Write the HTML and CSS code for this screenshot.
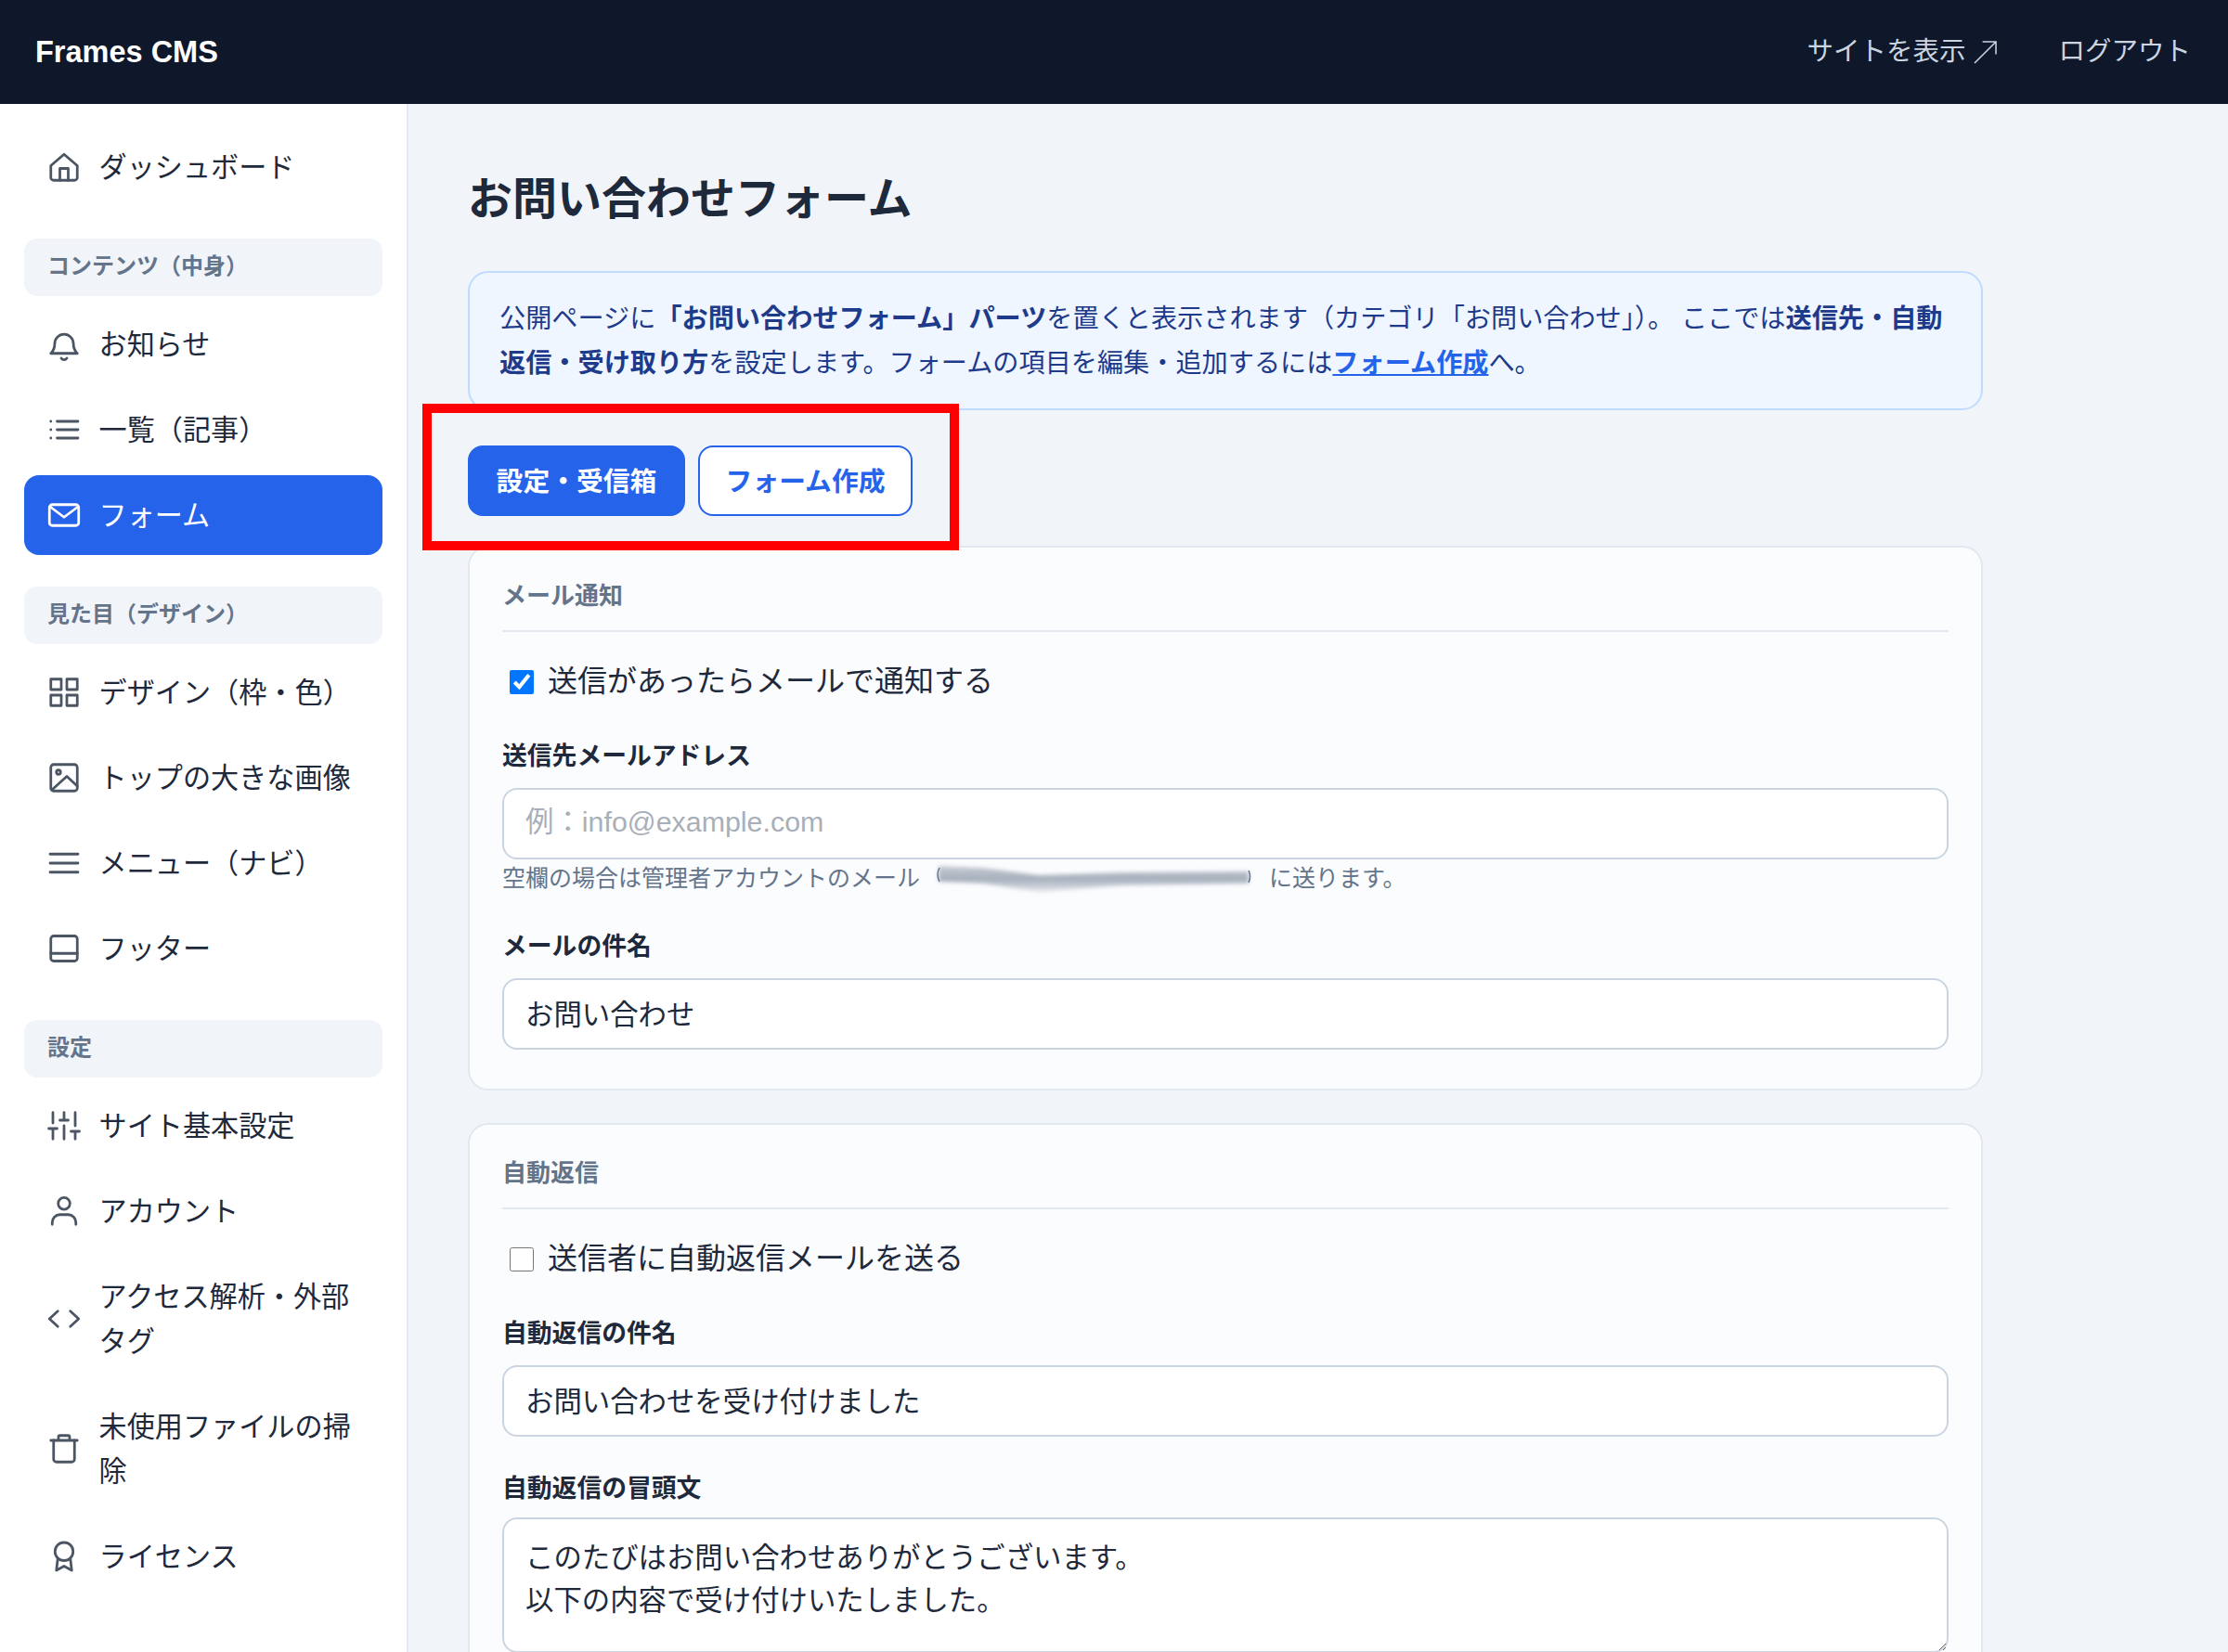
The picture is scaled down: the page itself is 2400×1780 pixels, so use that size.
FILE: index.html
```html
<!DOCTYPE html>
<html lang="ja">
<head>
<meta charset="utf-8">
<title>Frames CMS</title>
<link rel="stylesheet" href="styles.css">
</head>
<body>
<header class="topbar">
  <div class="brand">Frames CMS</div>
  <nav class="top-links">
    <a class="top-link" href="#"><span>サイトを表示</span><svg class="ext" viewBox="0 0 26 26"><path d="M1 25 25 1M10 1h15v14"/></svg></a>
    <a class="top-link" href="#">ログアウト</a>
  </nav>
</header>
<div class="shell">
  <aside class="sidebar">
    <a class="nav-item" href="#"><svg class="ico" viewBox="0 0 24 24"><path d="M2.500 11 12 2.800 21.500 11v8.500a2 2 0 0 1-2 2h-15a2 2 0 0 1-2-2z"/><path d="M9 21.500V13h6v8.500"/></svg><span>ダッシュボード</span></a>
    <div class="nav-group">コンテンツ（中身）</div>
    <a class="nav-item" href="#"><svg class="ico" viewBox="0 0 24 24"><path d="M2.500 18.500h19c-2-2-2.800-3.600-2.800-7a6.700 6.700 0 0 0-13.400 0c0 3.400-.8 5-2.800 7z"/><path d="M10 22a2.400 2.400 0 0 0 4 0"/></svg><span>お知らせ</span></a>
    <a class="nav-item" href="#"><svg class="ico" viewBox="0 0 24 24"><path d="M7 6h15M7 12h15M7 18h15"/><path d="M2.500 6h.01M2.500 12h.01M2.500 18h.01"/></svg><span>一覧（記事）</span></a>
    <a class="nav-item active" href="#"><svg class="ico" viewBox="0 0 24 24"><rect x="1.500" y="4.500" width="21" height="15" rx="2"/><path d="M2 6l10 7.500L22 6"/></svg><span>フォーム</span></a>
    <div class="nav-group">見た目（デザイン）</div>
    <a class="nav-item" href="#"><svg class="ico" viewBox="0 0 24 24"><rect x="2.500" y="2.500" width="7.500" height="7.500"/><rect x="14" y="2.500" width="7.500" height="7.500"/><rect x="2.500" y="14" width="7.500" height="7.500"/><rect x="14" y="14" width="7.500" height="7.500"/></svg><span>デザイン（枠・色）</span></a>
    <a class="nav-item" href="#"><svg class="ico" viewBox="0 0 24 24"><rect x="2.500" y="2.500" width="19" height="19" rx="2"/><circle cx="8" cy="8" r="1.500"/><path d="M3.500 20.500 14 11l7.500 7"/></svg><span>トップの大きな画像</span></a>
    <a class="nav-item" href="#"><svg class="ico" viewBox="0 0 24 24"><path d="M2 5.500h20M2 12h20M2 18.500h20"/></svg><span>メニュー（ナビ）</span></a>
    <a class="nav-item" href="#"><svg class="ico" viewBox="0 0 24 24"><rect x="2.500" y="3" width="19" height="18" rx="2"/><path d="M2.500 15.500h19"/></svg><span>フッター</span></a>
    <div class="nav-group">設定</div>
    <a class="nav-item" href="#"><svg class="ico" viewBox="0 0 24 24"><path d="M4 21.500V14M4 10V2.500M12 21.500V12M12 8V2.500M20 21.500V16M20 12V2.500M1 14h6M9 8h6M17 16h6"/></svg><span>サイト基本設定</span></a>
    <a class="nav-item" href="#"><svg class="ico" viewBox="0 0 24 24"><circle cx="12" cy="6.500" r="4.200"/><path d="M3.500 21.500v-1.500a5.500 5.500 0 0 1 5.500-5.500h6a5.500 5.500 0 0 1 5.500 5.500v1.500"/></svg><span>アカウント</span></a>
    <a class="nav-item" href="#"><svg class="ico" viewBox="0 0 24 24"><path d="M7.500 6.500 1.500 12l6 5.500M16.500 6.500l6 5.500-6 5.500"/></svg><span>アクセス解析・外部タグ</span></a>
    <a class="nav-item" href="#"><svg class="ico" viewBox="0 0 24 24"><path d="M2.500 6h19M8 6V3.500a1 1 0 0 1 1-1h6a1 1 0 0 1 1 1V6"/><path d="M4.500 6v13.500a2 2 0 0 0 2 2h11a2 2 0 0 0 2-2V6"/></svg><span>未使用ファイルの掃除</span></a>
    <a class="nav-item" href="#"><svg class="ico" viewBox="0 0 24 24"><circle cx="12" cy="8.500" r="6.500"/><path d="M7.500 13.500 6.500 22l5.500-3 5.500 3-1-8.500"/></svg><span>ライセンス</span></a>
  </aside>
  <main class="main">
    <h1 class="page-title">お問い合わせフォーム</h1>
    <p class="info">公開ページに<strong>「お問い合わせフォーム」パーツ</strong>を置くと表示されます（カテゴリ「お問い合わせ」）。 ここでは<strong>送信先・自動<br>返信・受け取り方</strong>を設定します。フォームの項目を編集・追加するには<a class="info-link" href="#">フォーム作成</a>へ。</p>
    <div class="tabs">
      <a class="tab tab-on" href="#">設定・受信箱</a>
      <a class="tab tab-off" href="#">フォーム作成</a>
      <div class="annotation"></div>
    </div>
    <section class="card">
      <h2 class="card-title">メール通知</h2>
      <label class="check-row"><input class="check" type="checkbox" checked><span>送信があったらメールで通知する</span></label>
      <label class="field-label" for="to">送信先メールアドレス</label>
      <input class="input" id="to" type="text" placeholder="例：info@example.com">
      <div class="hint">
        <span>空欄の場合は管理者アカウントのメール</span>
        <svg class="smear" viewBox="0 0 340 30"><defs><linearGradient id="sm" x1="0" y1="0" x2="0" y2="1"><stop offset="0" stop-color="#c9ced6"/><stop offset=".5" stop-color="#a6afbc"/><stop offset="1" stop-color="#e4e7ec"/></linearGradient></defs><path class="smear-blur" fill="url(#sm)" d="M2 2 50 4l60 8 90-3 136-1v13l-136 2-90 7-60-9-48-2z"/><path class="smear-paren" d="M336 7q3 6 0 13M3 4q-4 7 0 15"/></svg>
        <span>に送ります。</span>
      </div>
      <label class="field-label field-gap" for="subj">メールの件名</label>
      <input class="input" id="subj" type="text" value="お問い合わせ">
    </section>
    <section class="card">
      <h2 class="card-title">自動返信</h2>
      <label class="check-row"><input class="check" type="checkbox"><span>送信者に自動返信メールを送る</span></label>
      <label class="field-label" for="rs">自動返信の件名</label>
      <input class="input" id="rs" type="text" value="お問い合わせを受け付けました">
      <label class="field-label field-gap-sm" for="rb">自動返信の冒頭文</label>
      <textarea class="input textarea" id="rb">このたびはお問い合わせありがとうございます。
以下の内容で受け付けいたしました。</textarea>
    </section>
  </main>
</div>
</body>
</html>
```

FILE: styles.css
```css
* { box-sizing: border-box; }
html, body { margin: 0; height: 100%; }
body {
  height: 1780px;
  overflow: hidden;
  background: #f1f5f9;
  color: #1e293b;
  font-family: "Liberation Sans", "Noto Sans CJK JP", sans-serif;
  font-size: 30px;
  line-height: 1.6;
}
a { text-decoration: none; color: inherit; }

.topbar {
  height: 112px;
  background: #0f172a;
  display: flex;
  align-items: center;
  justify-content: space-between;
  padding: 0 40px 0 38px;
}
.brand { color: #fff; font-weight: 700; font-size: 32.5px; }
.top-links { display: flex; gap: 66px; }
.top-link {
  display: flex;
  align-items: center;
  gap: 9px;
  color: #cbd5e1;
  font-size: 28.5px;
}
.ext {
  width: 25px;
  height: 25px;
  flex: none;
  fill: none;
  stroke: #cbd5e1;
  stroke-width: 1.6;
}

.shell { display: flex; height: 1668px; }

.sidebar {
  width: 440px;
  flex: none;
  background: #fff;
  border-right: 2px solid #e2e8f0;
  padding: 25px 26px 0;
}
.nav-item {
  display: flex;
  align-items: center;
  gap: 20px;
  padding: 19px 26px 19px 24.500px;
  margin-bottom: 6px;
  border-radius: 16px;
  font-size: 30.15px;
  line-height: 48px;
  color: #1e293b;
}
.nav-item span { padding-top: 1px; margin-bottom: -1px; }
.nav-item.active { background: #2563eb; color: #fff; }
.nav-item.active .ico { color: #fff; }
.ico {
  width: 36px;
  height: 36px;
  flex: none;
  fill: none;
  stroke: currentColor;
  stroke-width: 1.850;
  stroke-linecap: round;
  stroke-linejoin: round;
  color: #4b5563;
}
.nav-group {
  height: 62px;
  margin: 34px 0 9px;
  padding: 0 25px;
  border-radius: 14px;
  background: #f1f5f9;
  color: #64748b;
  font-size: 24px;
  font-weight: 700;
  line-height: 60px;
}

.main {
  flex: 1;
  min-width: 0;
  padding: 64px 0 0 64px;
  overflow: hidden;
}
.main > * { width: 1632px; }
.page-title {
  margin: 0 0 39px;
  font-size: 48px;
  line-height: 77px;
  font-weight: 700;
  color: #1e293b;
}
.info {
  margin: 0 0 38px;
  padding: 26px 32px 24px;
  border: 2px solid #bfdbfe;
  border-radius: 22px;
  background: #eff6ff;
  color: #1e3a8a;
  font-size: 28.16px;
  line-height: 48px;
}
.info strong { font-weight: 700; }
.info-link { color: #2563eb; font-weight: 700; text-decoration: underline; }

.tabs {
  position: relative;
  display: flex;
  gap: 14px;
  margin-bottom: 32px;
}
.tab {
  height: 76px;
  border-radius: 16px;
  border: 2px solid #2563eb;
  font-size: 28.8px;
  font-weight: 700;
  line-height: 74px;
}
.tab-on { padding: 0 28.600px; background: #2563eb; color: #fff; }
.tab-off { padding: 0 27.600px; background: #fff; color: #2563eb; }
.annotation {
  position: absolute;
  left: -49px;
  top: -45px;
  width: 578px;
  height: 158px;
  border: 10px solid #f00;
  pointer-events: none;
}

.card {
  margin-bottom: 35px;
  padding: 31.500px 35px 42px;
  border: 2px solid #e2e8f0;
  border-radius: 22px;
  background: #fbfcfe;
}
.card-title {
  margin: 0 0 30px;
  padding-bottom: 16.500px;
  border-bottom: 2px solid #e2e8f0;
  color: #64748b;
  font-size: 26px;
  font-weight: 700;
  line-height: 41px;
}
.check-row {
  display: flex;
  align-items: center;
  height: 48px;
  padding-left: 8px;
  gap: 15px;
  margin-bottom: 34px;
  font-size: 32px;
}
.check {
  width: 26px;
  height: 26px;
  margin: 0;
  flex: none;
  accent-color: #0075ff;
}
.field-label {
  display: block;
  margin-bottom: 12px;
  font-size: 26.8px;
  font-weight: 700;
  line-height: 44px;
  color: #1e293b;
}
.field-gap { margin-top: 32px; }
.field-gap-sm { margin-top: 33.500px; margin-bottom: 9px; }
.input {
  display: block;
  width: 100%;
  height: 77px;
  padding: 0 23px 4px;
  border: 2px solid #cbd5e1;
  border-radius: 16px;
  background: #fff;
  color: #1e293b;
  font: inherit;
  font-size: 30.4px;
  outline: none;
}
.input::placeholder { color: #a9afb8; opacity: 1; }
.textarea {
  height: 146px;
  padding: 18px 23px;
  line-height: 46px;
  resize: vertical;
}
.hint {
  display: flex;
  align-items: center;
  gap: 18px;
  height: 40px;
  color: #64748b;
  font-size: 25px;
  line-height: 40px;
}
.smear { width: 340px; height: 30px; flex: none; overflow: visible; }
.smear-blur { filter: blur(2px); }
.smear-paren { fill: none; stroke: #64748b; stroke-width: 1.500; }
```
